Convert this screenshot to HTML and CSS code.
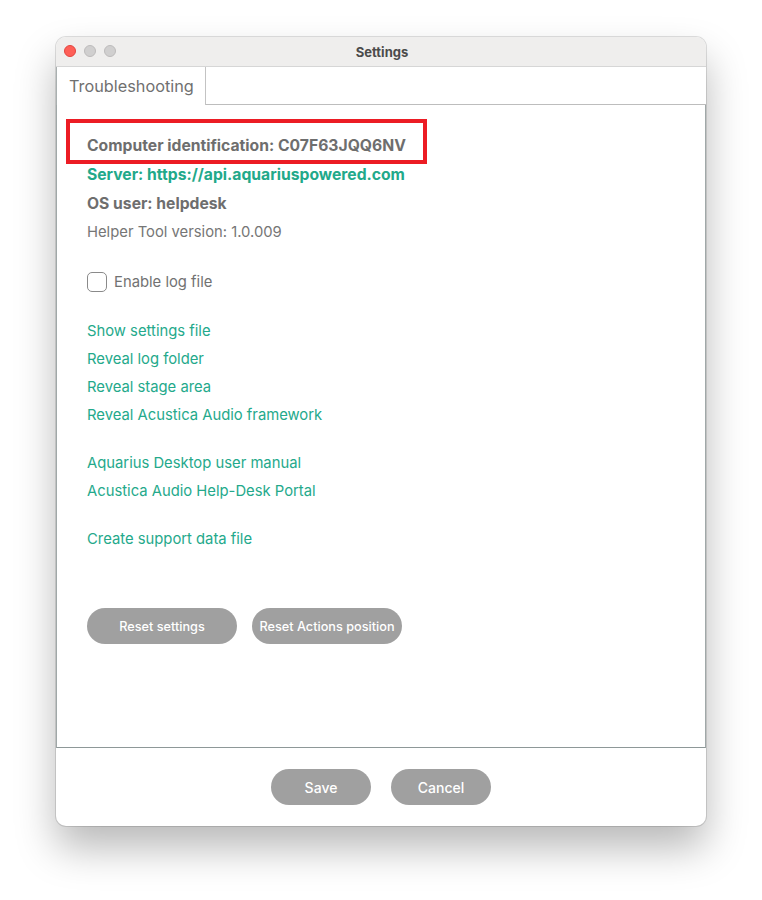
FILE: index.html
```html
<!DOCTYPE html>
<html>
<head>
<meta charset="utf-8">
<link rel="stylesheet" href="styles.css">
</head>
<body>
<div class="window">
  <div class="titlebar">
    <div class="lights">
      <span class="light red"></span>
      <span class="light grey"></span>
      <span class="light grey"></span>
    </div>
    <div class="title">Settings</div>
  </div>
  <div class="tabs">
    <div class="tab">Troubleshooting</div>
    <div class="tab-rest"></div>
  </div>
  <div class="panel">
    <div class="info">
      <div class="line bold highlight-wrap">Computer identification: C07F63JQQ6NV<span class="highlight"></span></div>
      <div class="line bold teal">Server: https://api.aquariuspowered.com</div>
      <div class="line bold">OS user: helpdesk</div>
      <div class="line">Helper Tool version: 1.0.009</div>
    </div>
    <label class="check-row"><span class="checkbox"></span><span>Enable log file</span></label>
    <div class="links">
      <div class="link">Show settings file</div>
      <div class="link">Reveal log folder</div>
      <div class="link">Reveal stage area</div>
      <div class="link">Reveal Acustica Audio framework</div>
    </div>
    <div class="links">
      <div class="link">Aquarius Desktop user manual</div>
      <div class="link">Acustica Audio Help-Desk Portal</div>
    </div>
    <div class="links">
      <div class="link">Create support data file</div>
    </div>
    <div class="btn-row">
      <button class="btn wide">Reset settings</button>
      <button class="btn wide">Reset Actions position</button>
    </div>
  </div>
  <div class="footer">
    <button class="btn small">Save</button>
    <button class="btn small">Cancel</button>
  </div>
</div>
</body>
</html>
```
FILE: styles.css
```css
html, body {
  margin: 0;
  padding: 0;
  background: #ffffff;
}
body {
  font-family: Inter, "Noto Sans", sans-serif;
  padding: 37px 0 0 56px;
  height: 900px;
  box-sizing: border-box;
}
.window {
  width: 650px;
  height: 789px;
  border-radius: 10px;
  background: #ffffff;
  box-shadow: 0 0 0 1px rgba(0,0,0,0.12), 0 22px 40px rgba(0,0,0,0.28);
  display: flex;
  flex-direction: column;
  overflow: hidden;
}
.titlebar {
  height: 29px;
  background: #efeeed;
  border-bottom: 1px solid #d6d6d6;
  position: relative;
  display: flex;
  align-items: center;
  justify-content: center;
  flex: none;
}
.lights {
  position: absolute;
  left: 8px;
  top: 8px;
  display: flex;
  gap: 8px;
}
.light {
  width: 12px;
  height: 12px;
  border-radius: 50%;
  box-sizing: border-box;
}
.light.red {
  background: #fe5f57;
  border: 1px solid #e2453f;
}
.light.grey {
  background: #d0cfcf;
  border: 1px solid #bcbbbb;
}
.title {
  font-size: 13px;
  font-weight: 700;
  color: #4b4b4b;
  padding-left: 2px;
}
.tabs {
  display: flex;
  height: 38px;
  flex: none;
}
.tab {
  width: 150px;
  padding-left: 12px;
  box-sizing: border-box;
  font-size: 16.3px;
  color: #707070;
  line-height: 38px;
  border-left: 1px solid #a9b0b0;
  border-right: 1px solid #c3c3c3;
  background: #fff;
}
.tab-rest {
  flex: 1;
  border-bottom: 1px solid #bdbdbd;
}
.panel {
  height: 643px;
  box-sizing: border-box;
  border-left: 1px solid #a0a8a8;
  border-right: 1px solid #a0a8a8;
  border-bottom: 1px solid #8e9898;
  padding: 26px 0 0 30px;
  flex: none;
}
.info {
  font-size: 14.8px;
  line-height: 29px;
  color: #767676;
}
.line.bold {
  font-weight: 700;
  font-size: 15.7px;
  color: #6e6e6e;
}
.line.teal {
  color: #22a98a;
}
.highlight-wrap {
  position: relative;
  width: fit-content;
}
.highlight {
  position: absolute;
  left: -21px;
  right: -21px;
  top: -12px;
  bottom: -4px;
  border: 4px solid #ec1c24;
}
.check-row {
  display: flex;
  align-items: center;
  gap: 7px;
  margin-top: 25px;
  height: 20px;
  font-size: 14.8px;
  color: #727272;
}
.checkbox {
  width: 20px;
  height: 20px;
  box-sizing: border-box;
  border: 1px solid #8a8a8a;
  border-radius: 5px;
  background: #fff;
}
.links {
  margin-top: 20px;
  font-size: 14.8px;
  line-height: 28px;
  color: #24a98b;
}
.check-row + .links {
  margin-top: 25px;
}
.btn-row {
  display: flex;
  gap: 15px;
  margin-top: 55px;
}
.btn {
  font-family: Inter, "Noto Sans", sans-serif;
  border: none;
  background: #a0a0a0;
  color: #ffffff;
  font-size: 12.7px;
  font-weight: 500;
  height: 36px;
  border-radius: 18px;
  padding: 0;
}
.btn.wide {
  width: 150px;
}
.btn.small {
  width: 100px;
  font-size: 14px;
}
.footer {
  flex: 1;
  display: flex;
  justify-content: center;
  align-items: flex-start;
  gap: 20px;
  padding-top: 21px;
}
```
